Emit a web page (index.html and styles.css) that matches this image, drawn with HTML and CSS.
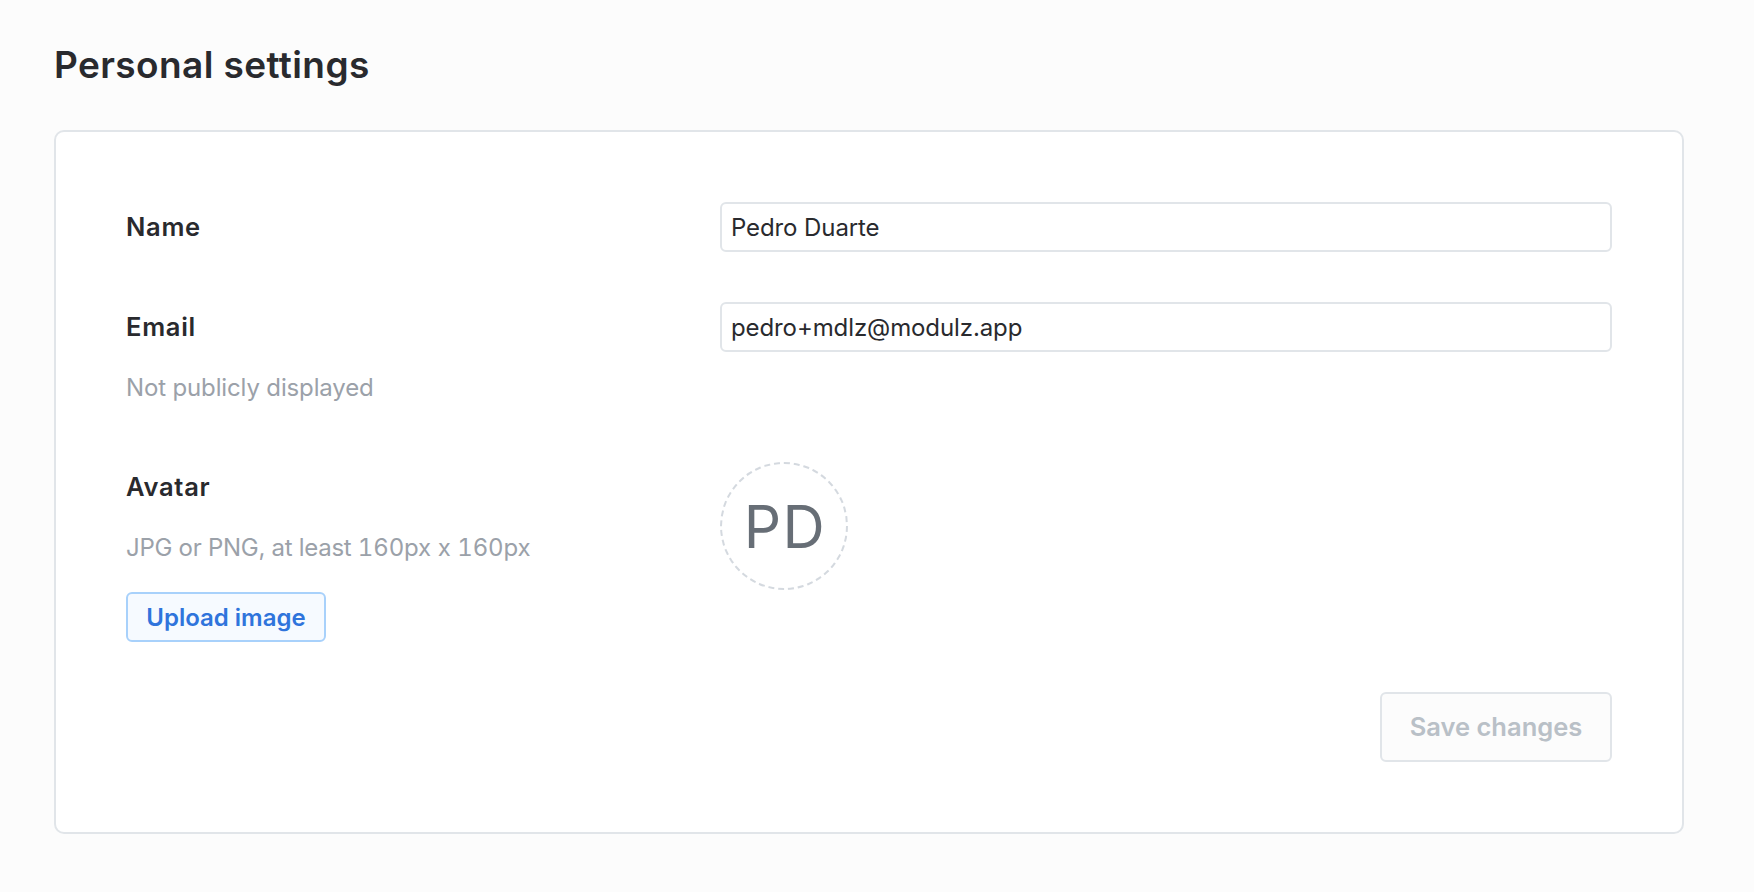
FILE: index.html
```html
<!DOCTYPE html>
<html lang="en">
<head>
<meta charset="utf-8">
<title>Personal settings</title>
<link rel="stylesheet" href="styles.css">
</head>
<body>
<main class="page">
  <h1 class="title">Personal settings</h1>
  <form class="card">
    <div class="row">
      <label class="label" for="name">Name</label>
      <input class="input" id="name" type="text" value="Pedro Duarte">
    </div>
    <div class="row">
      <div class="info">
        <label class="label" for="email">Email</label>
        <p class="hint">Not publicly displayed</p>
      </div>
      <input class="input" id="email" type="text" value="pedro+mdlz@modulz.app">
    </div>
    <div class="row">
      <div class="info">
        <span class="label">Avatar</span>
        <p class="hint"><span class="formats">JPG or PNG, at least </span><span class="digits">160</span>px x <span class="digits">160</span>px</p>
        <button class="upload" type="button">Upload image</button>
      </div>
      <div class="avatar">PD</div>
    </div>
    <button class="save" type="submit" disabled>Save changes</button>
  </form>
</main>
</body>
</html>
```
FILE: styles.css
```css
* { box-sizing: border-box; }
body {
  margin: 0;
  background: #fcfcfc;
  color: #292a2e;
  font-family: Inter, "Liberation Sans", sans-serif;
}
.page { padding: 40px 70px 0 54px; }
.title {
  margin: 0 0 40px;
  height: 50px;
  font-size: 37px;
  line-height: 50px;
  font-weight: 600;
  letter-spacing: 0.4px;
}
.card {
  display: flex;
  flex-direction: column;
  gap: 50px;
  height: 704px;
  padding: 70px;
  background: #fff;
  border: 2px solid #e1e5e9;
  border-radius: 10px;
}
.row {
  display: grid;
  grid-template-columns: 594px 892px;
  align-items: start;
}
.info { display: flex; flex-direction: column; align-items: flex-start; }
.label {
  display: block;
  height: 50px;
  font-size: 25.5px;
  line-height: 50px;
  font-weight: 600;
  letter-spacing: 0.7px;
}
.hint {
  margin: 10px 0 0;
  height: 50px;
  font-size: 24px;
  line-height: 52px;
  letter-spacing: -0.14px;
  color: #9ba1a9;
  white-space: nowrap;
}
.formats { letter-spacing: -0.28px; }
.digits { font-variant-numeric: tabular-nums; letter-spacing: -0.15px; }
.input {
  width: 100%;
  height: 50px;
  padding: 0 9px;
  border: 2px solid #e1e5e9;
  border-radius: 6px;
  background: #fff;
  color: #292a2e;
  font-family: inherit;
  font-size: 24px;
  letter-spacing: -0.1px;
  outline: none;
}
.upload {
  width: 200px;
  height: 50px;
  margin-top: 20px;
  padding: 0;
  border: 2px solid #a8d1fb;
  border-radius: 6px;
  background: #f6faff;
  color: #2f74dc;
  font-family: inherit;
  font-size: 24px;
  font-weight: 600;
}
.avatar {
  display: flex;
  align-items: center;
  justify-content: center;
  width: 128px;
  height: 128px;
  padding: 2px 0 0 2px;
  border: 2px dashed #d4d9df;
  border-radius: 50%;
  color: #676e76;
  font-size: 58.5px;
  line-height: 70px;
  letter-spacing: 1.5px;
}
.save {
  align-self: flex-end;
  width: 232px;
  height: 70px;
  padding: 0 0 2px;
  border: 2px solid #e1e5e9;
  border-radius: 6px;
  background: #fcfcfc;
  color: #b9c0c7;
  font-family: inherit;
  font-size: 25.5px;
  font-weight: 600;
}
```
